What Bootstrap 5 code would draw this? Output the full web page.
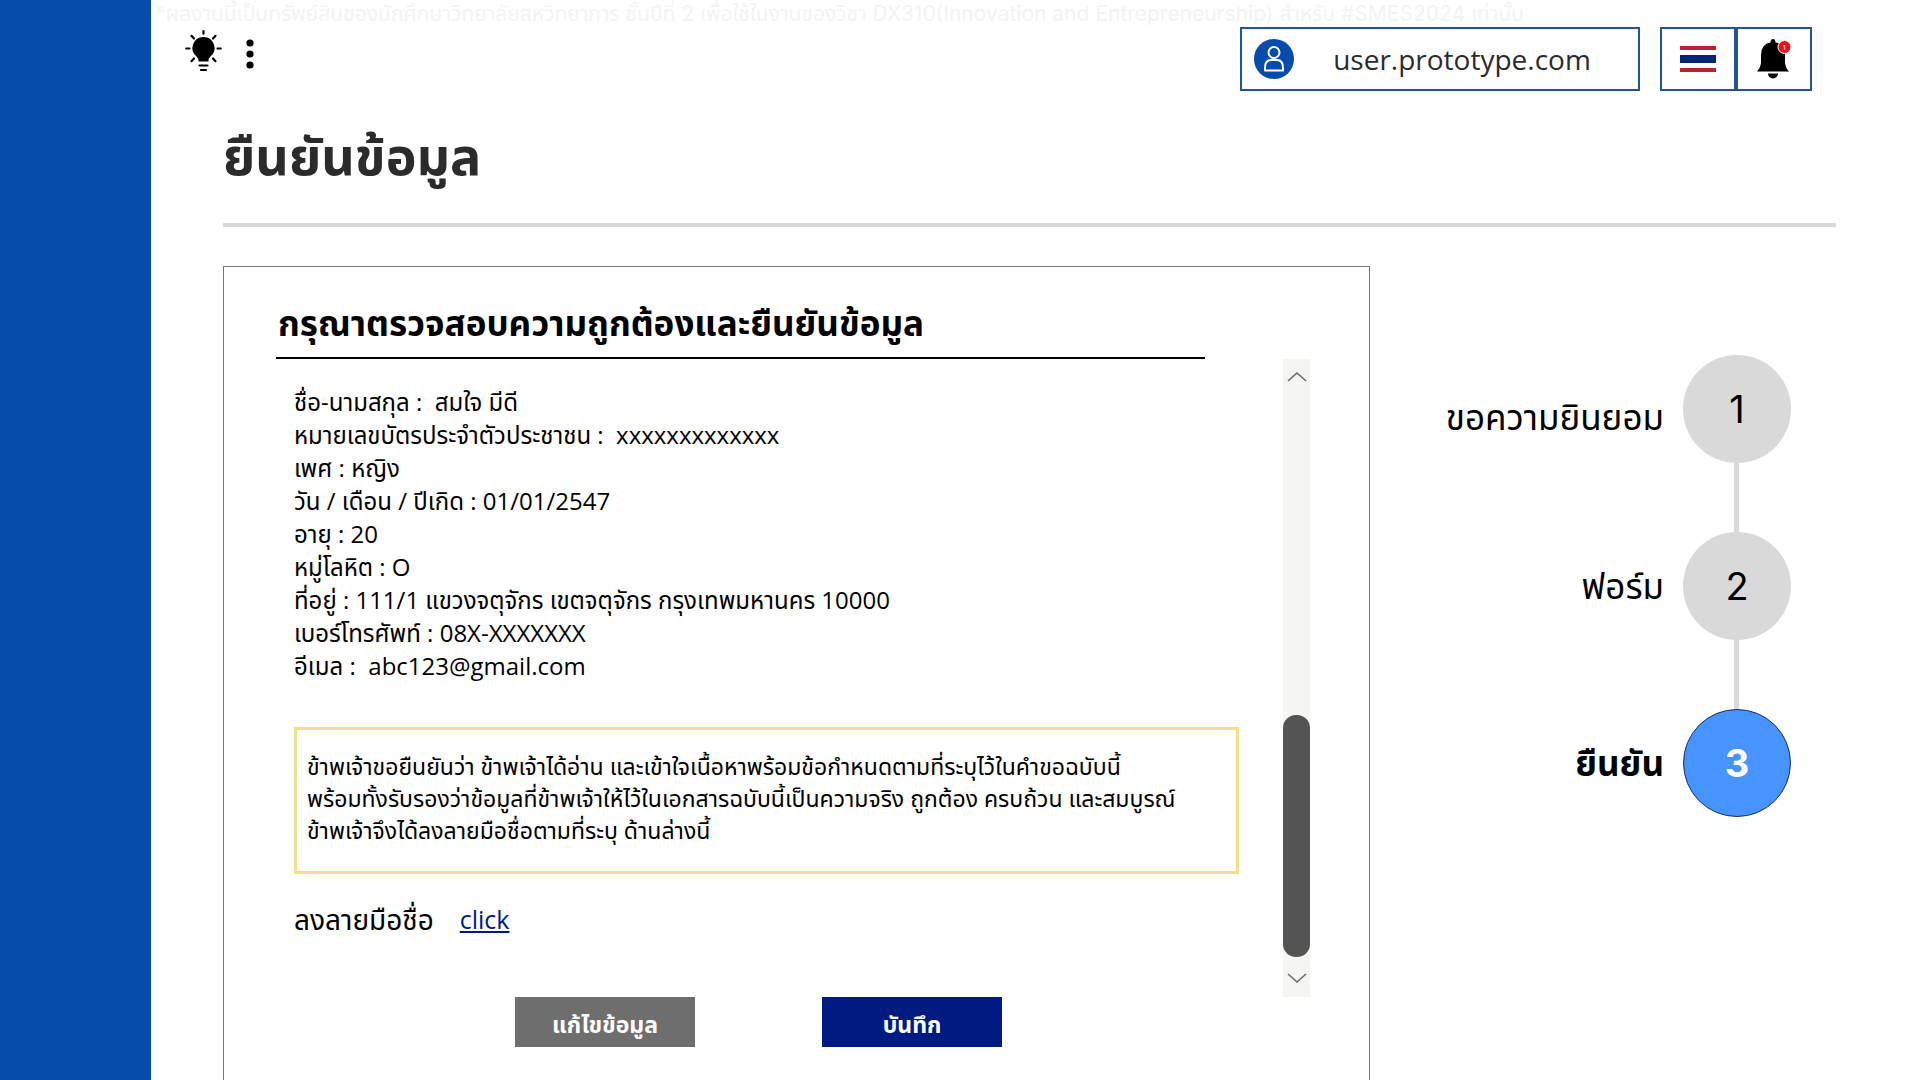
<!DOCTYPE html>
<html lang="th">
<head>
<meta charset="utf-8">
<meta name="viewport" content="width=device-width, initial-scale=1">
<title>ยืนยันข้อมูล</title>
<link rel="stylesheet" href="https://cdn.jsdelivr.net/npm/bootstrap@5.3.0/dist/css/bootstrap.min.css">
<style>
body{font-family:"Open Sans","Noto Sans Thai","Noto Sans",sans-serif;color:#000;background:#fff}
.side-rail{width:151px;background:#054cab}
.notice{font-size:21px;line-height:27px;color:#f3f3f3;padding-left:4px;font-family:Inter,"Noto Sans Thai",sans-serif}
.topbar{padding:0 108px 0 34px;height:64px}
.icon-btn{background:none;border:0;padding:0;line-height:0}
.outlined{border:2px solid #225596;background:#fff;height:64px}
.user-box{width:400px;margin-right:20px;padding:0 8px 0 12px;text-decoration:none;color:#2b2b2b;font-size:28px}
.square-btn{width:76px}
.content-area{padding:24px 84px 0 72px}
.page-title{font-size:52px;line-height:80px;font-weight:700;color:#2b2b2b;margin:0}
.title-rule{height:4px;background:#d9d9d9;margin:28px 0 39px}
.review-card{border:1px solid #777;border-bottom:0;padding:32px 59px 33px 52px}
.review-title{font-size:35px;font-weight:700;line-height:48px;margin:0;padding:0 0 10px 2px;border-bottom:2px solid #000}
.heading-wrap{margin-right:105px}
.details{font-size:24px;line-height:33px;padding:26px 0 0 18px}
.details p{margin:0;white-space:pre-wrap}
.statement{border:3px solid #eee08f;margin:45px 71px 0 18px;padding:20px 10px 25px;font-size:23px;line-height:32px}
.sign-row{font-size:28px;line-height:36px;padding:27px 0 0 18px;gap:26px}
.sign-row a{color:#001a83;font-size:25px}
.actions{gap:127px;padding:60px 0 0 239px}
.action-btn{width:180px;height:50px;border:0;border-radius:0;color:#fff;font-size:23px;font-weight:700;padding:4px 0 0}
.edit-btn{background:#6e6e6e}.save-btn{background:#001a83}
.scroll-track{width:27px;height:638px;background:#f5f6f2;margin-top:60px}
.scroll-thumb{height:242px;border-radius:13px;background:#545454;margin-top:auto}
.scroll-down{padding:15px 0 13px}
.scroll-col{width:27px;margin-left:-27px}
.steps{width:466px;padding:89px 45px 0 0}
.step-row{gap:19px}
.step-dot{width:108px;height:108px;border-radius:50%;background:#d9d9d9;font:400 38px Inter,sans-serif}
.step-dot.current{background:#4793ff;border:1px solid #16305e;color:#fff;font-weight:700}
.step-line{width:5px;height:69px;background:#d9d9d9;margin-right:52px}
.step-label{font-size:35px;line-height:48px}
</style>
<script src="https://cdn.jsdelivr.net/npm/bootstrap@5.3.0/dist/js/bootstrap.bundle.min.js"></script>
</head>
<body>
<div class="d-flex min-vh-100">
  <aside class="side-rail flex-shrink-0"></aside>
  <div class="d-flex flex-column flex-grow-1">
    <p class="notice m-0">*ผลงานนี้เป็นทรัพย์สินของนักศึกษาวิทยาลัยสหวิทยาการ ชั้นปีที่ 2 เพื่อใช้ในงานของวิชา DX310(Innovation and Entrepreneurship) สำหรับ #SMES2024 เท่านั้น</p>
    <header class="topbar d-flex align-items-center">
      <div class="d-flex align-items-end gap-4 pb-3">
        <button class="icon-btn" aria-label="ธีม"><svg width="37" height="42" viewBox="0 0 37 42"><path d="M18.500 7a11 11 0 0 0-7 19.500q2 1.500 2 5h10q0-3.500 2-5a11 11 0 0 0-7-19.500z"/><path d="M18.500 1.200v2.500M6.500 5.800l2.500 2.700M30.500 5.800 28 8.500M1.200 18.500h3.300M32.500 18.500h3.300M6.500 31.200 9 28.500M30.500 31.200 28 28.500M14.500 35.500h8M16 40h5" stroke="#000" stroke-width="2.200" stroke-linecap="round"/></svg></button>
        <button class="icon-btn" aria-label="เมนู"><svg width="8" height="34" viewBox="0 0 8 34"><circle cx="4" cy="5" r="3.600"/><circle cx="4" cy="16" r="3.600"/><circle cx="4" cy="27" r="3.600"/></svg></button>
      </div>
      <a href="#" class="user-box outlined d-flex align-items-center ms-auto">
        <svg width="40" height="40" viewBox="0 0 40 40"><circle cx="20" cy="20" r="20" fill="#054cab"/><g fill="none" stroke="#fff" stroke-width="2"><circle cx="20" cy="13.500" r="5.500"/><path d="M11 31.500V29q0-8 6-8h6q6 0 6 8v2.500z" stroke-linejoin="round"/></g></svg>
        <span class="flex-grow-1 text-center">user.prototype.com</span>
      </a>
      <button class="square-btn outlined p-0" aria-label="ภาษาไทย"><svg width="36" height="26" viewBox="0 0 36 26"><path fill="#b3262c" d="M0 0h36v4H0zM0 22h36v4H0z"/><path fill="#00237a" d="M0 9h36v8H0z"/></svg></button>
      <button class="square-btn outlined p-0" aria-label="การแจ้งเตือน"><svg width="34" height="40" viewBox="0 0 34 40"><path d="M16 0q2.500 0 2.500 3.500Q28 5 28 16v7q0 5 4 9.500H0Q4 28 4 23v-7Q4 5 13.500 3.500 13.500 0 16 0z"/><path d="M11 34.500h10a5 5 0 0 1-10 0z"/><circle cx="27.500" cy="8" r="6.500" fill="#f01018" stroke="#fff"/><text x="27.500" y="11" font-size="8" fill="#fff" text-anchor="middle">1</text></svg></button>
    </header>
    <main class="content-area d-flex flex-column flex-grow-1">
      <h1 class="page-title">ยืนยันข้อมูล</h1>
      <div class="title-rule"></div>
      <div class="d-flex flex-grow-1">
        <section class="review-card d-flex flex-grow-1">
          <div class="flex-grow-1">
            <div class="heading-wrap"><h2 class="review-title">กรุณาตรวจสอบความถูกต้องและยืนยันข้อมูล</h2></div>
            <div class="details">
              <p>ชื่อ-นามสกุล :  สมใจ มีดี</p>
              <p>หมายเลขบัตรประจำตัวประชาชน :  xxxxxxxxxxxxx</p>
              <p>เพศ : หญิง</p>
              <p>วัน / เดือน / ปีเกิด : 01/01/2547</p>
              <p>อายุ : 20</p>
              <p>หมู่โลหิต : O</p>
              <p>ที่อยู่ : 111/1 แขวงจตุจักร เขตจตุจักร กรุงเทพมหานคร 10000</p>
              <p>เบอร์โทรศัพท์ : 08X-XXXXXXX</p>
              <p>อีเมล :  abc123@gmail.com</p>
            </div>
            <div class="statement">ข้าพเจ้าขอยืนยันว่า ข้าพเจ้าได้อ่าน และเข้าใจเนื้อหาพร้อมข้อกำหนดตามที่ระบุไว้ในคำขอฉบับนี้<br>พร้อมทั้งรับรองว่าข้อมูลที่ข้าพเจ้าให้ไว้ในเอกสารฉบับนี้เป็นความจริง ถูกต้อง ครบถ้วน และสมบูรณ์<br>ข้าพเจ้าจึงได้ลงลายมือชื่อตามที่ระบุ ด้านล่างนี้</div>
            <div class="sign-row d-flex"><span>ลงลายมือชื่อ</span><a href="#">click</a></div>
            <div class="actions d-flex">
              <button class="action-btn edit-btn">แก้ไขข้อมูล</button>
              <button class="action-btn save-btn">บันทึก</button>
            </div>
          </div>
          <div class="scroll-col flex-shrink-0">
            <div class="scroll-track d-flex flex-column align-items-stretch">
              <button class="icon-btn pt-2 mt-1" aria-label="เลื่อนขึ้น"><svg width="20" height="12" viewBox="0 0 20 12"><path d="m1 10 9-8 9 8" fill="none" stroke="#666" stroke-width="1.500"/></svg></button>
              <div class="scroll-thumb"></div>
              <button class="icon-btn scroll-down" aria-label="เลื่อนลง"><svg width="20" height="12" viewBox="0 0 20 12"><path d="m1 2 9 8 9-8" fill="none" stroke="#666" stroke-width="1.500"/></svg></button>
            </div>
          </div>
        </section>
        <aside class="steps d-flex flex-column align-items-end flex-shrink-0">
          <div class="step-row d-flex align-items-center"><span class="step-label pt-3">ขอความยินยอม</span><span class="step-dot d-flex align-items-center justify-content-center">1</span></div>
          <div class="step-line"></div>
          <div class="step-row d-flex align-items-center"><span class="step-label">ฟอร์ม</span><span class="step-dot d-flex align-items-center justify-content-center">2</span></div>
          <div class="step-line"></div>
          <div class="step-row d-flex align-items-center"><span class="step-label fw-bold">ยืนยัน</span><span class="step-dot current d-flex align-items-center justify-content-center">3</span></div>
        </aside>
      </div>
    </main>
  </div>
</div>
</body>
</html>
